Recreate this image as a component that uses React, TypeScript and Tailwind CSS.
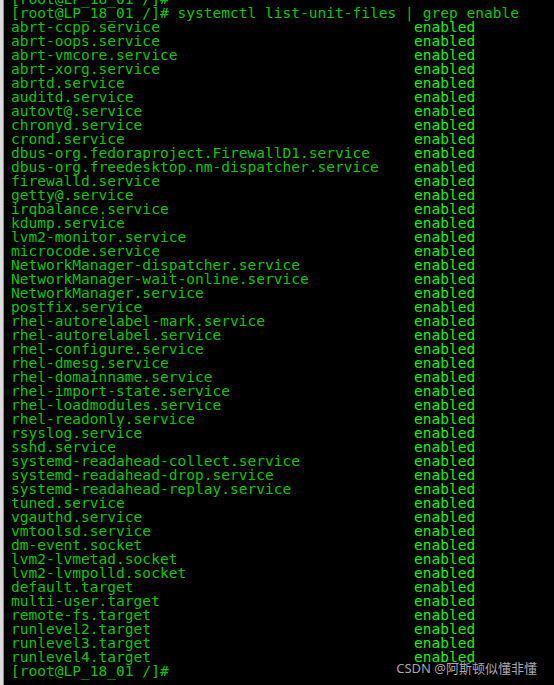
import React from 'react';

const PROMPT = '[root@LP_18_01 /]#';

const units: string[] = [
  'abrt-ccpp.service',
  'abrt-oops.service',
  'abrt-vmcore.service',
  'abrt-xorg.service',
  'abrtd.service',
  'auditd.service',
  'autovt@.service',
  'chronyd.service',
  'crond.service',
  'dbus-org.fedoraproject.FirewallD1.service',
  'dbus-org.freedesktop.nm-dispatcher.service',
  'firewalld.service',
  'getty@.service',
  'irqbalance.service',
  'kdump.service',
  'lvm2-monitor.service',
  'microcode.service',
  'NetworkManager-dispatcher.service',
  'NetworkManager-wait-online.service',
  'NetworkManager.service',
  'postfix.service',
  'rhel-autorelabel-mark.service',
  'rhel-autorelabel.service',
  'rhel-configure.service',
  'rhel-dmesg.service',
  'rhel-domainname.service',
  'rhel-import-state.service',
  'rhel-loadmodules.service',
  'rhel-readonly.service',
  'rsyslog.service',
  'sshd.service',
  'systemd-readahead-collect.service',
  'systemd-readahead-drop.service',
  'systemd-readahead-replay.service',
  'tuned.service',
  'vgauthd.service',
  'vmtoolsd.service',
  'dm-event.socket',
  'lvm2-lvmetad.socket',
  'lvm2-lvmpolld.socket',
  'default.target',
  'multi-user.target',
  'remote-fs.target',
  'runlevel2.target',
  'runlevel3.target',
  'runlevel4.target',
];

const App: React.FC = () => {
  return (
    <div className="relative flex h-[685px] w-[554px] overflow-hidden bg-black">
      {/* window edge */}
      <div className="w-[3px] shrink-0 bg-[#dcdcdc]" />
      <div className="w-px shrink-0 bg-[#8a8a8a]" />

      <div
        className="mt-[-8px] pl-[7px] whitespace-pre text-[14.55px] leading-[14px] text-[#00c800]"
        style={{ fontFamily: '"DejaVu Sans Mono", "Liberation Mono", monospace' }}
      >
        <div>{PROMPT}</div>
        <div>{PROMPT} systemctl list-unit-files | grep enable</div>
        {units.map((name) => (
          <div key={name}>
            {name.padEnd(46, ' ')}
            <span className="text-[#00f800]">enabled</span>
          </div>
        ))}
        <div>{PROMPT}</div>
      </div>

      <div
        className="absolute right-[17px] bottom-[9px] text-[13px] leading-[15px] text-[#a8a8a8]"
        style={{ fontFamily: '"Noto Sans", "Noto Sans CJK SC", sans-serif' }}
      >
        CSDN @阿斯顿似懂非懂
      </div>
    </div>
  );
};

export default App;
